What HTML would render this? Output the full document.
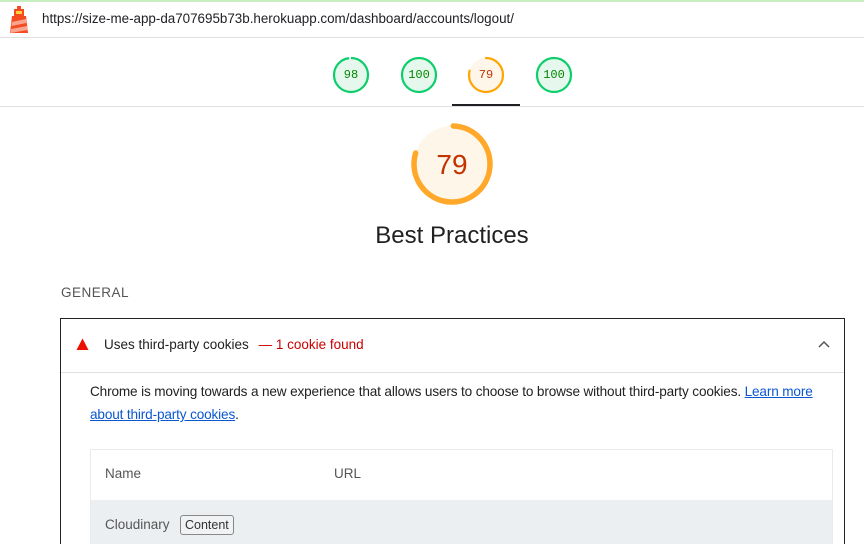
<!DOCTYPE html>
<html style="overflow:hidden;height:544px"><head><meta charset="utf-8"><style>
*{margin:0;padding:0;box-sizing:border-box}
body{width:864px;height:544px;overflow:hidden;background:#fff;font-family:"Liberation Sans",Arial,sans-serif;position:relative;color:#212121}
.abs{position:absolute}
.g{position:absolute;width:38px;height:38px}
.g span{position:absolute;left:0;top:0;width:38px;height:38px;line-height:38px;text-align:center;font-family:"Liberation Mono",monospace;font-size:12px}
</style></head><body>
<div class="abs" style="left:0;top:0;width:864px;height:2px;background:#c8eec0"></div>
<div class="abs" style="left:0;top:37px;width:864px;height:1px;background:#e0e0e0"></div>
<svg class="abs" style="left:9px;top:6px" width="20" height="27" viewBox="0 0 20 27">
<rect x="8" y="0" width="4" height="3" fill="#f44b21"/>
<rect x="5" y="3" width="10" height="7" fill="#f44b21"/>
<rect x="7" y="5" width="6" height="3" fill="#ffd23c"/>
<polygon points="3,10 17,10 19,27 1,27" fill="#f44b21"/>
<polygon points="3,16 17,13 17.5,17 2.5,20" fill="#f9a58f"/>
<polygon points="2,23 18,20 18.5,24 1.5,27" fill="#f9a58f"/>
</svg>
<div class="abs" style="left:42px;top:11px;font-size:13.4px;color:#202124">https://size-me-app-da707695b73b.herokuapp.com/dashboard/accounts/logout/</div>

<div class="g" style="left:332px;top:56px"><svg width="38" height="38"><circle cx="19" cy="19" r="17" fill="#e6f8ed" stroke="#0cce6b" stroke-width="2.2" stroke-dasharray="104.7 200" transform="rotate(-90 19 19)"/></svg><span style="color:#008800">98</span></div>
<div class="g" style="left:400px;top:56px"><svg width="38" height="38"><circle cx="19" cy="19" r="17" fill="#e6f8ed" stroke="#0cce6b" stroke-width="2.2"/></svg><span style="color:#008800">100</span></div>
<div class="g" style="left:467px;top:56px"><svg width="38" height="38"><circle cx="19" cy="19" r="17" fill="#fff6ea" stroke="#ffa400" stroke-width="2.2" stroke-linecap="round" stroke-dasharray="84.4 200" transform="rotate(-90 19 19)"/></svg><span style="color:#c33300">79</span></div>
<div class="g" style="left:535px;top:56px"><svg width="38" height="38"><circle cx="19" cy="19" r="17" fill="#e6f8ed" stroke="#0cce6b" stroke-width="2.2"/></svg><span style="color:#008800">100</span></div>
<div class="abs" style="left:0;top:106px;width:864px;height:1px;background:#e0e0e0"></div>
<div class="abs" style="left:452px;top:104px;width:68px;height:2px;background:#202124"></div>

<svg class="abs" style="left:410px;top:122px" width="84" height="84"><circle cx="42" cy="42" r="38" fill="#fff6ea" stroke="#ffa82a" stroke-width="5.5" stroke-linecap="round" stroke-dasharray="188.6 300" transform="rotate(-88 42 42)"/></svg>
<div class="abs" style="left:410px;top:149px;width:84px;text-align:center;font-size:28px;color:#c33300">79</div>
<div class="abs" style="left:300px;top:222px;width:304px;text-align:center;font-size:24px;color:#212121">Best Practices</div>
<div class="abs" style="left:61px;top:285px;font-size:13.5px;color:#555;letter-spacing:0.5px">GENERAL</div>

<div class="abs" style="left:60px;top:318px;width:785px;height:240px;border:1px solid #222"></div>
<div class="abs" style="left:61px;top:372px;width:783px;height:1px;background:#e0e0e0"></div>
<svg class="abs" style="left:76px;top:338px" width="13" height="13"><polygon points="6.5,0.5 12.5,12 0.5,12" fill="#eb0f00"/></svg>
<div class="abs" style="left:104px;top:337px;font-size:13.5px;color:#212121">Uses third-party cookies <span style="color:#c00;margin-left:6px">— 1 cookie found</span></div>
<svg class="abs" style="left:817px;top:339px" width="14" height="10"><polyline points="2,8 7,3 12,8" fill="none" stroke="#555" stroke-width="1.5"/></svg>
<div class="abs" style="left:90px;top:380px;width:740px;font-size:13.6px;line-height:23px;color:#212121;letter-spacing:-0.15px">Chrome is moving towards a new experience that allows users to choose to browse without third-party cookies. <span style="color:#0b57d0;text-decoration:underline">Learn more about third-party cookies</span>.</div>

<div class="abs" style="left:90px;top:449px;width:743px;height:100px;border:1px solid #ebebeb"></div>
<div class="abs" style="left:91px;top:500px;width:741px;height:44px;background:#eceff1"></div>
<div class="abs" style="left:105px;top:466px;font-size:13.5px;color:#555">Name</div>
<div class="abs" style="left:334px;top:466px;font-size:13.5px;color:#555">URL</div>
<div class="abs" style="left:105px;top:517px;font-size:13.5px;color:#555">Cloudinary</div>
<div class="abs" style="left:180px;top:515px;height:20px;padding:0 4px;border:1px solid #888;border-radius:3px;font-size:12.5px;line-height:18px;color:#333;background:#f0f2f4">Content</div>
</body></html>
